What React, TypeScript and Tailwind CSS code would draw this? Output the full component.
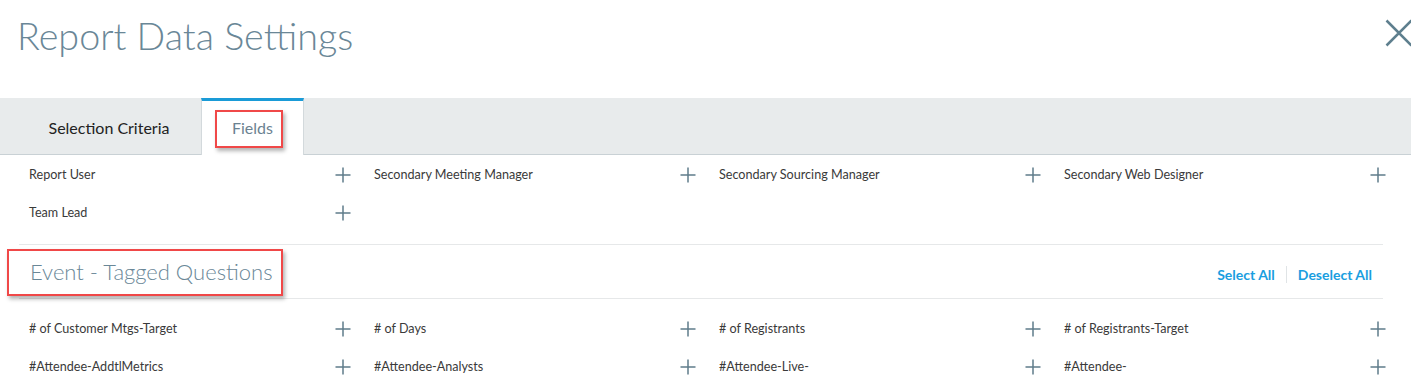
const generalFields = ['Report User', 'Secondary Meeting Manager', 'Secondary Sourcing Manager', 'Secondary Web Designer', 'Team Lead'];
const taggedFields = ['# of Customer Mtgs-Target', '# of Days', '# of Registrants', '# of Registrants-Target', '#Attendee-AddtlMetrics', '#Attendee-Analysts', '#Attendee-Live-', '#Attendee-'];

function PlusIcon() {
  return (
    <svg width="16" height="16" viewBox="0 0 16 16" className="shrink-0">
      <path d="M8 0.5V15.5M0.5 8H15.5" stroke="#5f7c8b" strokeWidth="1.5" />
    </svg>
  );
}

function FieldGrid({ fields }: { fields: string[] }) {
  return (
    <div className="ml-[17px] grid w-[1380px] grid-cols-4">
      {fields.map((field) => (
        <div key={field} className="flex h-[38px] items-center justify-between pl-3 pr-[11px]">
          <span className="text-[12.6px] text-[#3a3a3a]">{field}</span>
          <PlusIcon />
        </div>
      ))}
    </div>
  );
}

export default function App() {
  return (
    <main className="h-[392px] w-[1411px] overflow-hidden bg-white font-['Lato','Liberation_Sans',sans-serif]">
      <header className="relative h-[98px]">
        <h1 className="pl-[17px] pt-[13px] text-[37.7px] leading-[46px] font-light text-[#6a8797]">Report Data Settings</h1>
        <button type="button" className="absolute right-[-2px] top-[19px]">
          <svg width="28" height="28" viewBox="0 0 28 28">
            <path d="M1.5 1.5L26.5 26.5M26.5 1.5L1.5 26.5" stroke="#5e7f8e" strokeWidth="2.5" />
          </svg>
        </button>
      </header>

      <nav className="flex h-[57px] border-b border-[#c9d1d5] bg-[#e8ebec]">
        <div className="ml-[17px] flex w-[184px] items-center justify-center pt-[4px] text-[16px] text-[#222]">Selection Criteria</div>
        <div className="mb-[-1px] flex w-[103px] items-center justify-center border-x border-t-[3px] border-x-[#d3d9dc] border-t-[#1a9bd7] bg-white">
          <span className="relative text-[16px] leading-[20px] text-[#6b8291]">
            Fields
            <span className="absolute -left-[17px] -right-[10px] -top-[8px] -bottom-[10px] border-2 border-[#f04848] shadow-[2px_3px_4px_rgba(0,0,0,0.3)]" />
          </span>
        </div>
      </nav>

      <section className="pt-px pb-3">
        <FieldGrid fields={generalFields} />
      </section>

      <div className="ml-[19px] mr-[28px] flex h-[55px] items-center justify-between border-y border-[#e6e8e9] px-[11px]">
        <h2 className="relative text-[22px] leading-[30px] font-light text-[#6a8797]">
          Event - Tagged Questions
          <span className="absolute -left-[23px] -right-[10px] -top-[8px] -bottom-[9px] border-2 border-[#f04848] shadow-[2px_3px_4px_rgba(0,0,0,0.3)]" />
        </h2>
        <div className="flex items-center pt-[5px] text-[14px] font-bold text-[#1a9ee0]">
          <button type="button">Select All</button>
          <span className="mx-[11px] h-[17px] w-px bg-[#e0e4e6]" />
          <button type="button">Deselect All</button>
        </div>
      </div>

      <section className="pt-[11px]">
        <FieldGrid fields={taggedFields} />
      </section>
    </main>
  );
}
